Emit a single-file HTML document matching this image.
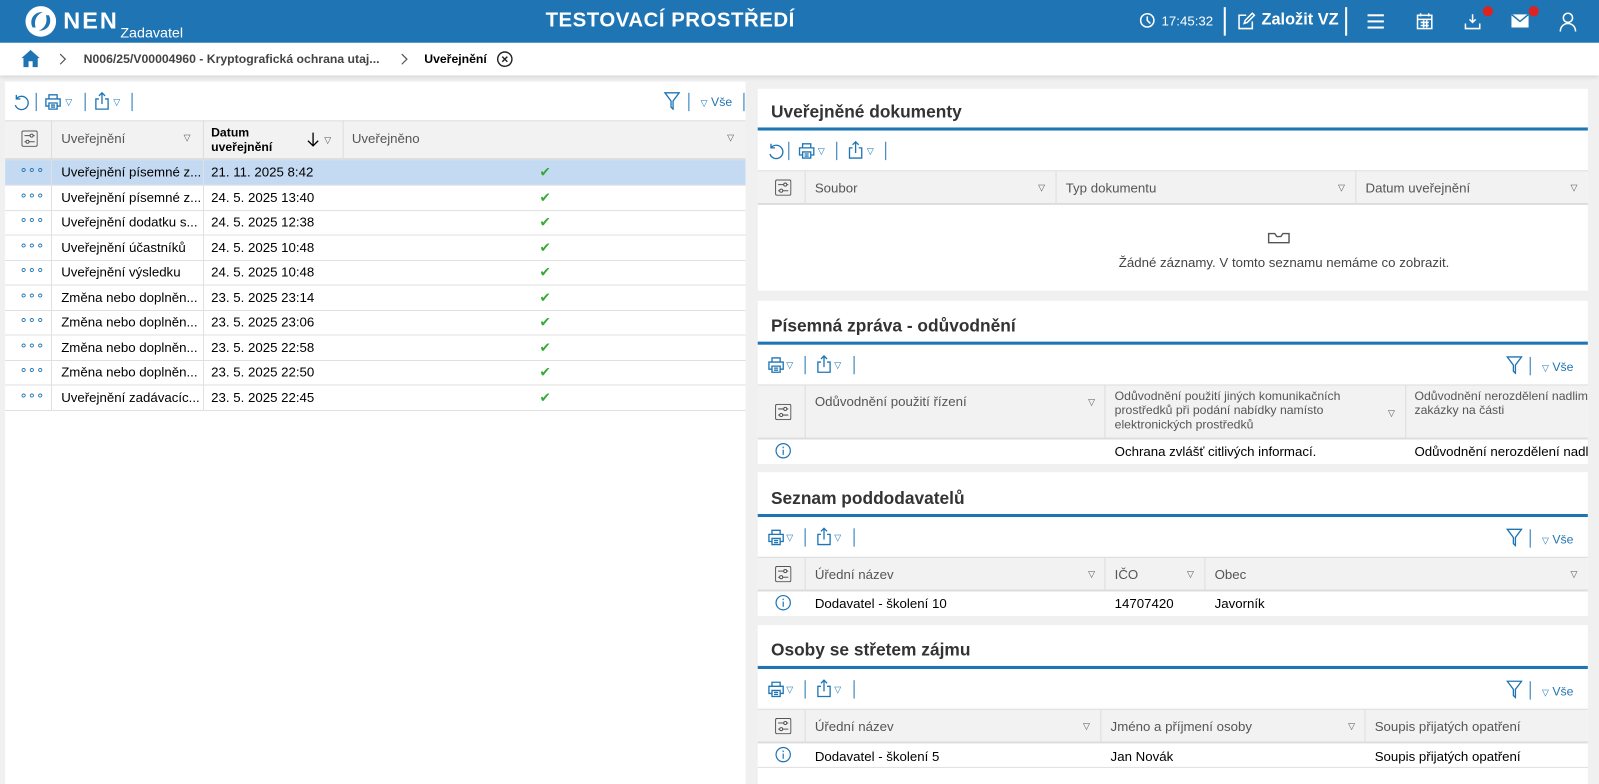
<!DOCTYPE html><html><head><meta charset="utf-8"><style>
*{box-sizing:border-box;margin:0;padding:0}
body{width:1599px;height:784px;overflow:hidden;background:#f0f0f0;font-family:"Liberation Sans",sans-serif;font-size:13px;color:#000;position:relative}
#w{position:absolute;left:0;top:0;width:1568px;height:769px;transform:scale(1.0198);transform-origin:0 0}
.a{position:absolute}
.top{left:0;top:0;width:1568px;height:42px;background:#1f75b4;color:#fff}
.bc{left:0;top:42px;width:1568px;height:32px;background:#fff;box-shadow:0 2px 4px rgba(0,0,0,.12)}
.panel{background:#fff}
.sep{width:1px;height:18px;background:#1f75b4}
.hd{background:#f2f2f2;border-top:1px solid #ddd;border-bottom:2px solid #ddd}
.hc{color:#555;font-size:13px}
.vl{width:1px;background:#ddd}
.row{border-bottom:1px solid #e0e0e0;height:25px;width:726px;left:5px}
.row span{position:absolute;top:4px}
.tt{font-size:17px;font-weight:bold;color:#333}
.bl{height:3px;background:#1f75b4}
.tri{font-size:9px;color:#555}
.tb2{color:#1f75b4;font-size:9px}
</style></head><body><div id="w">
<div class="a top">
 <svg class="a" style="left:24px;top:5px" width="32" height="32" viewBox="0 0 32 32"><circle cx="16" cy="16" r="15" fill="#fff"/><path d="M8 22 C4 14 10 6 18 7 C12 9 9 15 11 22Z M24 10 C28 18 22 26 14 25 C20 23 23 17 21 10Z" fill="#1f75b4"/></svg>
 <div class="a" style="left:62px;top:7px;font-size:23px;font-weight:bold;letter-spacing:2px">NEN</div>
 <div class="a" style="left:118px;top:24px;font-size:14px">Zadavatel</div>
 <div class="a" style="left:535px;top:9px;font-size:20px;font-weight:bold;letter-spacing:.5px">TESTOVACÍ PROSTŘEDÍ</div>
 <svg class="a" style="left:1117px;top:12px" width="16" height="16" viewBox="0 0 16 16" fill="none" stroke="#fff" stroke-width="1.5"><circle cx="8" cy="8" r="6.5"/><path d="M8 4v4l3 3"/></svg>
 <div class="a" style="left:1139px;top:13px;font-size:13px">17:45:32</div>
 <div class="a" style="left:1200px;top:7px;width:2px;height:28px;background:#fff"></div>
 <svg class="a" style="left:1213px;top:12px" width="18" height="18" viewBox="0 0 18 18" fill="none" stroke="#fff" stroke-width="1.5"><path d="M9 3H2v13h13V9M7 11l1-3 7-7 2 2-7 7z"/></svg>
 <div class="a" style="left:1237px;top:11px;font-size:16px;font-weight:bold">Založit VZ</div>
 <div class="a" style="left:1319px;top:7px;width:2px;height:28px;background:#fff"></div>
 <div class="a" style="left:1341px;top:14px;width:16px;height:2px;background:#fff;box-shadow:0 6px #fff,0 12px #fff"></div>
 <svg class="a" style="left:1388px;top:12px" width="18" height="18" viewBox="0 0 18 18" fill="none" stroke="#fff" stroke-width="1.5"><rect x="2" y="3" width="14" height="13"/><path d="M2 7h14M5 1v3M13 1v3M5 10h8M5 13h8M8 8v7M11 8v7"/></svg>
 <svg class="a" style="left:1435px;top:12px" width="18" height="18" viewBox="0 0 18 18" fill="none" stroke="#fff" stroke-width="1.5"><path d="M9 2v8M6 7l3 3 3-3M2 11v5h14v-5"/></svg>
 <div class="a" style="left:1454px;top:6px;width:10px;height:10px;border-radius:5px;background:#d22"></div>
 <svg class="a" style="left:1482px;top:14px" width="17" height="13" viewBox="0 0 17 13"><rect width="17" height="13" fill="#fff"/><path d="M0 0l8.5 7 8.5-7" fill="none" stroke="#1f75b4" stroke-width="1.5"/></svg>
 <div class="a" style="left:1499px;top:6px;width:10px;height:10px;border-radius:5px;background:#d22"></div>
 <svg class="a" style="left:1529px;top:12px" width="17" height="19" viewBox="0 0 17 19" fill="none" stroke="#fff" stroke-width="1.5"><circle cx="8.5" cy="5.5" r="4.5"/><path d="M1 19c0-5 3.5-8 7.5-8s7.5 3 7.5 8"/></svg>
</div>
<div class="a bc">
 <svg class="a" style="left:21px;top:7px" width="18" height="17" viewBox="0 0 18 17"><path d="M9 0L0 8h2v9h5v-6h4v6h5V8h2z" fill="#1f75b4"/></svg>
 <svg class="a" style="left:58px;top:10px" width="8" height="12" viewBox="0 0 8 12" fill="none" stroke="#555" stroke-width="1.2"><path d="M1 1l5 5-5 5"/></svg>
 <div class="a" style="left:82px;top:9px;font-size:12px;font-weight:bold;color:#444">N006/25/V00004960 - Kryptografická ochrana utaj...</div>
 <svg class="a" style="left:393px;top:10px" width="8" height="12" viewBox="0 0 8 12" fill="none" stroke="#555" stroke-width="1.2"><path d="M1 1l5 5-5 5"/></svg>
 <div class="a" style="left:416px;top:9px;font-size:12px;font-weight:bold">Uveřejnění</div>
 <svg class="a" style="left:487px;top:8px" width="16" height="16" viewBox="0 0 16 16" fill="none" stroke="#222" stroke-width="1.4"><circle cx="8" cy="8" r="7"/><path d="M5.5 5.5l5 5M10.5 5.5l-5 5"/></svg>
</div>
<svg width="0" height="0" style="position:absolute"><defs>
<symbol id="pr" viewBox="0 0 18 18"><g fill="none" stroke="#1f75b4" stroke-width="1.3"><path d="M5 6V2h8v4M5 13H2V6h14v7h-3M5 10h8v6H5z M7 12h4M7 14h4"/></g></symbol>
<symbol id="sh" viewBox="0 0 18 18"><g fill="none" stroke="#1f75b4" stroke-width="1.3"><path d="M6 7H3v10h12V7h-3M9 12V1M6 4l3-3 3 3"/></g></symbol>
<symbol id="rf" viewBox="0 0 18 18"><g fill="none" stroke="#1f75b4" stroke-width="1.3"><path d="M4 5a6.5 6.5 0 1 1-1 6M4 1v4h4" transform="translate(0,1)"/></g></symbol>
<symbol id="st" viewBox="0 0 16 16"><g fill="none" stroke="#555" stroke-width="1"><rect x=".5" y=".5" width="15" height="15" rx="1.5"/><path d="M3 5h10M3 11h10"/><circle cx="10" cy="5" r="1.5" fill="#fff"/><circle cx="6" cy="11" r="1.5" fill="#fff"/></g></symbol>
<symbol id="fl" viewBox="0 0 16 18"><path d="M1 1h14L9 9v8l-2-2V9z" fill="none" stroke="#1f75b4" stroke-width="1.3"/></symbol>
<symbol id="in" viewBox="0 0 16 16"><g fill="none" stroke="#1f75b4" stroke-width="1.2"><circle cx="8" cy="8" r="7"/><path d="M8 7v5M8 4v1.5"/></g></symbol>
</defs></svg>
<div class="a panel" style="left:5px;top:80px;width:726px;height:689px">
 <svg class="a" style="left:7px;top:11px" width="18" height="18"><use href="#rf"/></svg><div class="a sep" style="left:30px;top:11px"></div>
 <svg class="a" style="left:38px;top:11px" width="18" height="18"><use href="#pr"/></svg><div class="a tb2" style="left:59px;top:15px">▽</div><div class="a sep" style="left:78px;top:11px"></div>
 <svg class="a" style="left:86px;top:10px" width="18" height="18"><use href="#sh"/></svg><div class="a tb2" style="left:106px;top:15px">▽</div><div class="a sep" style="left:124px;top:11px"></div>
 <svg class="a" style="left:646px;top:10px" width="16" height="18"><use href="#fl"/></svg>
 <div class="a sep" style="left:670px;top:11px"></div>
 <div class="a" style="left:682px;top:13px;color:#1f75b4;font-size:12px"><span class="tb2">▽</span> Vše</div>
 <div class="a sep" style="left:724px;top:11px"></div>
 <div class="a hd" style="left:0;top:38px;width:726px;height:39px"></div>
</div>
<svg class="a" style="left:21px;top:128px" width="16" height="16"><use href="#st"/></svg>
<div class="a vl" style="left:50px;top:118px;height:38px"></div>
<div class="a vl" style="left:199px;top:118px;height:38px"></div>
<div class="a vl" style="left:336px;top:118px;height:38px"></div>
<div class="a hc" style="left:60px;top:128px">Uveřejnění</div><div class="a tri" style="left:180px;top:130px">▽</div>
<div class="a" style="left:207px;top:123px;font-size:12px;font-weight:bold;line-height:14px">Datum<br>uveřejnění</div>
<svg class="a" style="left:301px;top:129px" width="12" height="15" viewBox="0 0 12 15" fill="none" stroke="#000" stroke-width="1.3"><path d="M6 1v13M1 9l5 5 5-5"/></svg><div class="a tri" style="left:318px;top:132px">▽</div>
<div class="a hc" style="left:345px;top:128px">Uveřejněno</div><div class="a tri" style="left:713px;top:130px">▽</div>
<div class="a row" style="top:157px;background:#c4daf3"><span style="left:14px;color:#1f75b4;top:2px">∘∘∘</span><span style="left:55px">Uveřejnění písemné z...</span><span style="left:202px">21. 11. 2025 8:42</span><span style="left:524px;color:#3a3">✔</span></div>
<div class="a row" style="top:182px"><span style="left:14px;color:#1f75b4;top:2px">∘∘∘</span><span style="left:55px">Uveřejnění písemné z...</span><span style="left:202px">24. 5. 2025 13:40</span><span style="left:524px;color:#3a3">✔</span></div>
<div class="a row" style="top:206px"><span style="left:14px;color:#1f75b4;top:2px">∘∘∘</span><span style="left:55px">Uveřejnění dodatku s...</span><span style="left:202px">24. 5. 2025 12:38</span><span style="left:524px;color:#3a3">✔</span></div>
<div class="a row" style="top:231px"><span style="left:14px;color:#1f75b4;top:2px">∘∘∘</span><span style="left:55px">Uveřejnění účastníků</span><span style="left:202px">24. 5. 2025 10:48</span><span style="left:524px;color:#3a3">✔</span></div>
<div class="a row" style="top:255px"><span style="left:14px;color:#1f75b4;top:2px">∘∘∘</span><span style="left:55px">Uveřejnění výsledku</span><span style="left:202px">24. 5. 2025 10:48</span><span style="left:524px;color:#3a3">✔</span></div>
<div class="a row" style="top:280px"><span style="left:14px;color:#1f75b4;top:2px">∘∘∘</span><span style="left:55px">Změna nebo doplněn...</span><span style="left:202px">23. 5. 2025 23:14</span><span style="left:524px;color:#3a3">✔</span></div>
<div class="a row" style="top:304px"><span style="left:14px;color:#1f75b4;top:2px">∘∘∘</span><span style="left:55px">Změna nebo doplněn...</span><span style="left:202px">23. 5. 2025 23:06</span><span style="left:524px;color:#3a3">✔</span></div>
<div class="a row" style="top:329px"><span style="left:14px;color:#1f75b4;top:2px">∘∘∘</span><span style="left:55px">Změna nebo doplněn...</span><span style="left:202px">23. 5. 2025 22:58</span><span style="left:524px;color:#3a3">✔</span></div>
<div class="a row" style="top:353px"><span style="left:14px;color:#1f75b4;top:2px">∘∘∘</span><span style="left:55px">Změna nebo doplněn...</span><span style="left:202px">23. 5. 2025 22:50</span><span style="left:524px;color:#3a3">✔</span></div>
<div class="a row" style="top:378px"><span style="left:14px;color:#1f75b4;top:2px">∘∘∘</span><span style="left:55px">Uveřejnění zadávacíc...</span><span style="left:202px">23. 5. 2025 22:45</span><span style="left:524px;color:#3a3">✔</span></div>
<div class="a" style="left:50px;top:157px;width:1px;height:245px;background:#e0e0e0"></div>
<div class="a" style="left:199px;top:157px;width:1px;height:245px;background:#e0e0e0"></div>

<div class="a panel" style="left:743px;top:87px;width:814px;height:198px"></div>
<div class="a tt" style="left:756px;top:100px">Uveřejněné dokumenty</div>
<div class="a bl" style="left:743px;top:125px;width:814px"></div>
<svg class="a" style="left:752px;top:139px" width="18" height="18"><use href="#rf"/></svg><div class="a sep" style="left:773px;top:139px"></div>
<svg class="a" style="left:782px;top:139px" width="18" height="18"><use href="#pr"/></svg><div class="a tb2" style="left:802px;top:143px">▽</div><div class="a sep" style="left:820px;top:139px"></div>
<svg class="a" style="left:830px;top:138px" width="18" height="18"><use href="#sh"/></svg><div class="a tb2" style="left:850px;top:143px">▽</div><div class="a sep" style="left:868px;top:139px"></div>
<div class="a hd" style="left:743px;top:167px;width:814px;height:34px"></div>
<svg class="a" style="left:760px;top:176px" width="16" height="16"><use href="#st"/></svg>
<div class="a vl" style="left:789px;top:168px;height:31px"></div><div class="a vl" style="left:1035px;top:168px;height:31px"></div><div class="a vl" style="left:1329px;top:168px;height:31px"></div>
<div class="a hc" style="left:799px;top:177px">Soubor</div><div class="a tri" style="left:1018px;top:179px">▽</div>
<div class="a hc" style="left:1045px;top:177px">Typ dokumentu</div><div class="a tri" style="left:1312px;top:179px">▽</div>
<div class="a hc" style="left:1339px;top:177px">Datum uveřejnění</div><div class="a tri" style="left:1540px;top:179px">▽</div>
<svg class="a" style="left:1243px;top:228px" width="22" height="11" viewBox="0 0 22 11" fill="none" stroke="#555" stroke-width="1.4"><path d="M1 1h6l2 3h4l2-3h6v9H1z"/></svg>
<div class="a" style="left:1097px;top:250px;color:#444">Žádné záznamy. V tomto seznamu nemáme co zobrazit.</div>

<div class="a panel" style="left:743px;top:295px;width:814px;height:160px"></div>
<div class="a tt" style="left:756px;top:310px">Písemná zpráva - odůvodnění</div>
<div class="a bl" style="left:743px;top:335px;width:814px"></div>
<svg class="a" style="left:752px;top:349px" width="18" height="18"><use href="#pr"/></svg><div class="a tb2" style="left:771px;top:353px">▽</div><div class="a sep" style="left:789px;top:349px"></div>
<svg class="a" style="left:799px;top:348px" width="18" height="18"><use href="#sh"/></svg><div class="a tb2" style="left:818px;top:353px">▽</div><div class="a sep" style="left:837px;top:349px"></div>
<svg class="a" style="left:1477px;top:349px" width="16" height="18"><use href="#fl"/></svg>
<div class="a sep" style="left:1500px;top:350px"></div>
<div class="a" style="left:1512px;top:353px;color:#1f75b4;font-size:12px"><span class="tb2">▽</span> Vše</div>
<div class="a hd" style="left:743px;top:377px;width:814px;height:54px"></div>
<svg class="a" style="left:760px;top:396px" width="16" height="16"><use href="#st"/></svg>
<div class="a vl" style="left:789px;top:378px;height:51px"></div><div class="a vl" style="left:1083px;top:378px;height:51px"></div><div class="a vl" style="left:1378px;top:378px;height:51px"></div>
<div class="a hc" style="left:799px;top:386px">Odůvodnění použití řízení</div><div class="a tri" style="left:1067px;top:389px">▽</div>
<div class="a hc" style="left:1093px;top:381px;font-size:12px;line-height:14px">Odůvodnění použití jiných komunikačních<br>prostředků při podání nabídky namísto<br>elektronických prostředků</div><div class="a tri" style="left:1361px;top:400px">▽</div>
<div class="a hc" style="left:1387px;top:381px;font-size:12px;line-height:14px;white-space:nowrap;width:170px;overflow:hidden">Odůvodnění nerozdělení nadlimitní<br>zakázky na části</div>
<svg class="a" style="left:760px;top:434px" width="16" height="16"><use href="#in"/></svg>
<div class="a" style="left:1093px;top:435px">Ochrana zvlášť citlivých informací.</div>
<div class="a" style="left:1387px;top:435px;width:170px;overflow:hidden;white-space:nowrap">Odůvodnění nerozdělení nadlimitní</div>

<div class="a panel" style="left:743px;top:463px;width:814px;height:141px"></div>
<div class="a tt" style="left:756px;top:479px">Seznam poddodavatelů</div>
<div class="a bl" style="left:743px;top:504px;width:814px"></div>
<svg class="a" style="left:752px;top:518px" width="18" height="18"><use href="#pr"/></svg><div class="a tb2" style="left:771px;top:522px">▽</div><div class="a sep" style="left:789px;top:518px"></div>
<svg class="a" style="left:799px;top:517px" width="18" height="18"><use href="#sh"/></svg><div class="a tb2" style="left:818px;top:522px">▽</div><div class="a sep" style="left:837px;top:518px"></div>
<svg class="a" style="left:1477px;top:518px" width="16" height="18"><use href="#fl"/></svg>
<div class="a sep" style="left:1500px;top:519px"></div>
<div class="a" style="left:1512px;top:522px;color:#1f75b4;font-size:12px"><span class="tb2">▽</span> Vše</div>
<div class="a hd" style="left:743px;top:546px;width:814px;height:34px"></div>
<svg class="a" style="left:760px;top:555px" width="16" height="16"><use href="#st"/></svg>
<div class="a vl" style="left:789px;top:547px;height:31px"></div><div class="a vl" style="left:1083px;top:547px;height:31px"></div><div class="a vl" style="left:1181px;top:547px;height:31px"></div>
<div class="a hc" style="left:799px;top:556px">Úřední název</div><div class="a tri" style="left:1067px;top:558px">▽</div>
<div class="a hc" style="left:1093px;top:556px">IČO</div><div class="a tri" style="left:1164px;top:558px">▽</div>
<div class="a hc" style="left:1191px;top:556px">Obec</div><div class="a tri" style="left:1540px;top:558px">▽</div>
<svg class="a" style="left:760px;top:583px" width="16" height="16"><use href="#in"/></svg>
<div class="a" style="left:799px;top:584px">Dodavatel - školení 10</div>
<div class="a" style="left:1093px;top:584px">14707420</div>
<div class="a" style="left:1191px;top:584px">Javorník</div>

<div class="a panel" style="left:743px;top:613px;width:814px;height:156px"></div>
<div class="a tt" style="left:756px;top:628px">Osoby se střetem zájmu</div>
<div class="a bl" style="left:743px;top:653px;width:814px"></div>
<svg class="a" style="left:752px;top:667px" width="18" height="18"><use href="#pr"/></svg><div class="a tb2" style="left:771px;top:671px">▽</div><div class="a sep" style="left:789px;top:667px"></div>
<svg class="a" style="left:799px;top:666px" width="18" height="18"><use href="#sh"/></svg><div class="a tb2" style="left:818px;top:671px">▽</div><div class="a sep" style="left:837px;top:667px"></div>
<svg class="a" style="left:1477px;top:667px" width="16" height="18"><use href="#fl"/></svg>
<div class="a sep" style="left:1500px;top:668px"></div>
<div class="a" style="left:1512px;top:671px;color:#1f75b4;font-size:12px"><span class="tb2">▽</span> Vše</div>
<div class="a hd" style="left:743px;top:695px;width:814px;height:34px"></div>
<svg class="a" style="left:760px;top:704px" width="16" height="16"><use href="#st"/></svg>
<div class="a vl" style="left:789px;top:696px;height:31px"></div><div class="a vl" style="left:1079px;top:696px;height:31px"></div><div class="a vl" style="left:1338px;top:696px;height:31px"></div>
<div class="a hc" style="left:799px;top:705px">Úřední název</div><div class="a tri" style="left:1062px;top:707px">▽</div>
<div class="a hc" style="left:1089px;top:705px">Jméno a příjmení osoby</div><div class="a tri" style="left:1322px;top:707px">▽</div>
<div class="a hc" style="left:1348px;top:705px">Soupis přijatých opatření</div>
<svg class="a" style="left:760px;top:732px" width="16" height="16"><use href="#in"/></svg>
<div class="a" style="left:799px;top:734px">Dodavatel - školení 5</div>
<div class="a" style="left:1089px;top:734px">Jan Novák</div>
<div class="a" style="left:1348px;top:734px">Soupis přijatých opatření</div>
<div class="a" style="left:743px;top:752px;width:814px;height:1px;background:#e0e0e0"></div>
</div></body></html>
